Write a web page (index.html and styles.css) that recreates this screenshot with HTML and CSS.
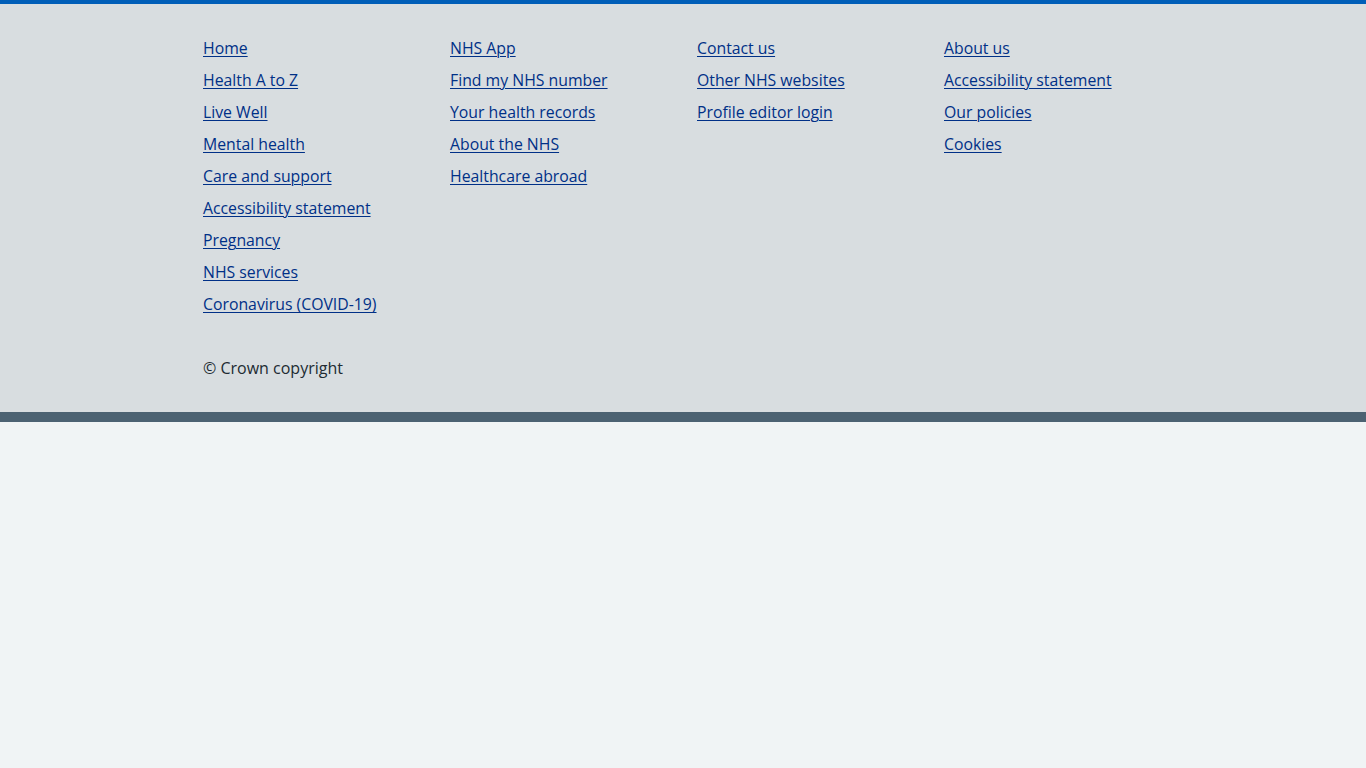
FILE: index.html
```html
<!DOCTYPE html>
<html lang="en">
<head>
<meta charset="utf-8">
<title>Footer</title>
<link rel="stylesheet" href="styles.css">
</head>
<body>
<footer class="footer">
  <div class="container">
    <div class="columns">
      <ul class="list">
        <li><a href="#">Home</a></li>
        <li><a href="#">Health A to Z</a></li>
        <li><a href="#">Live Well</a></li>
        <li><a href="#">Mental health</a></li>
        <li><a href="#">Care and support</a></li>
        <li><a href="#">Accessibility statement</a></li>
        <li><a href="#">Pregnancy</a></li>
        <li><a href="#">NHS services</a></li>
        <li><a href="#">Coronavirus (COVID-19)</a></li>
      </ul>
      <ul class="list">
        <li><a href="#">NHS App</a></li>
        <li><a href="#">Find my NHS number</a></li>
        <li><a href="#">Your health records</a></li>
        <li><a href="#">About the NHS</a></li>
        <li><a href="#">Healthcare abroad</a></li>
      </ul>
      <ul class="list">
        <li><a href="#">Contact us</a></li>
        <li><a href="#">Other NHS websites</a></li>
        <li><a href="#">Profile editor login</a></li>
      </ul>
      <ul class="list">
        <li><a href="#">About us</a></li>
        <li><a href="#">Accessibility statement</a></li>
        <li><a href="#">Our policies</a></li>
        <li><a href="#">Cookies</a></li>
      </ul>
    </div>
    <p class="copyright">© Crown copyright</p>
  </div>
</footer>
</body>
</html>
```
FILE: styles.css
```css
html, body {
  margin: 0;
  padding: 0;
  background: #f0f4f5;
}
body {
  font-family: "Open Sans", "Noto Sans", sans-serif;
  font-size: 16px;
  line-height: 24px;
  color: #212b32;
}
.footer {
  background: #d8dde0;
  border-top: 4px solid #005eb8;
  border-bottom: 10px solid #4c6272;
  padding: 32px 0;
}
.container {
  width: 960px;
  margin: 0 auto;
}
.columns {
  display: grid;
  grid-template-columns: repeat(4, 247px);
  align-items: start;
}
.list {
  list-style: none;
  margin: 0;
  padding: 0;
}
.list li {
  margin-bottom: 8px;
  font-size: 15.8px;
}
.list li:last-child {
  margin-bottom: 0;
}
.list a {
  color: #003087;
  text-decoration: underline;
  text-underline-offset: 2px;
  text-decoration-thickness: 1px;
}
.copyright {
  margin: 40px 0 0;
  font-size: 16px;
  color: #212b32;
}
```
